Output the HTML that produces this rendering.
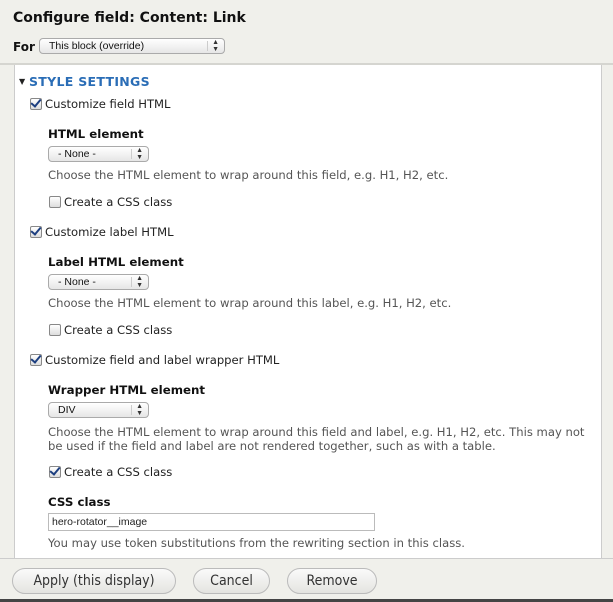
<!DOCTYPE html>
<html><head><style>
body{margin:0;width:613px;height:602px;background:#f0f0eb;font-family:"DejaVu Sans","Liberation Sans",sans-serif;font-size:11.6px;color:#222;position:relative;overflow:hidden}
.a{position:absolute;white-space:nowrap;line-height:14px}
.t{font-weight:bold;font-size:14px;left:13px;top:8px;line-height:20px;color:#111}
.b{font-weight:bold;font-size:11.8px;color:#111}
.d{color:#555}
.sel{position:absolute;height:14px;border:1px solid #aaa;border-radius:4px;background:linear-gradient(#fff,#e6e6e6);font-family:"Liberation Sans",sans-serif;font-size:10.5px;line-height:14px;color:#111;padding-left:9px;box-sizing:content-box}
.sel:after{content:"";position:absolute;right:16px;top:2px;width:1px;height:10px;background:#ccc}
.sel i{position:absolute;right:5px;top:0;font-style:normal;font-size:7px;line-height:7px;color:#333}
.cb{position:absolute;width:10px;height:10px;border:1px solid #888;border-radius:2px;background:linear-gradient(#fff,#ddd);margin-top:1px}
.cb.k:after{content:"";position:absolute;left:2px;top:-2px;width:4px;height:8px;border:solid #1d3f80;border-width:0 2px 2px 0;transform:rotate(40deg)}
.btn{position:absolute;top:568px;height:24px;border:1px solid #bbb;border-radius:13px;background:linear-gradient(#fafafa,#e4e4e0);font-size:14px;line-height:24px;text-align:center;color:#333;font-family:"DejaVu Sans Condensed","DejaVu Sans",sans-serif}
</style></head><body>
<div class="a t">Configure field: Content: Link</div>
<div class="a b" style="left:13px;top:40px;font-size:12px">For</div>
<div class="sel" style="left:39px;top:38px;width:175px">This block (override)<i>▲<br>▼</i></div>
<div style="position:absolute;left:0;top:63px;width:613px;height:2px;background:#d5d5d0"></div>
<div style="position:absolute;left:14px;top:65px;width:586px;height:493px;background:#fff;border-left:1px solid #ccc;border-right:1px solid #ccc"></div>
<div class="a" style="left:19px;top:75px;font-size:8px;color:#222">▼</div>
<div class="a" style="left:29px;top:75px;font-weight:bold;color:#2a6db6;font-size:12.5px;letter-spacing:0.3px">STYLE SETTINGS</div>

<div class="cb k" style="left:30px;top:97px"></div><div class="a" style="left:45px;top:97px">Customize field HTML</div>
<div class="a b" style="left:48px;top:127px">HTML element</div>
<div class="sel" style="left:48px;top:146px;width:90px">- None -<i>▲<br>▼</i></div>
<div class="a d" style="left:48px;top:168px">Choose the HTML element to wrap around this field, e.g. H1, H2, etc.</div>
<div class="cb" style="left:49px;top:195px"></div><div class="a" style="left:64px;top:195px">Create a CSS class</div>

<div class="cb k" style="left:30px;top:225px"></div><div class="a" style="left:45px;top:225px">Customize label HTML</div>
<div class="a b" style="left:48px;top:255px">Label HTML element</div>
<div class="sel" style="left:48px;top:274px;width:90px">- None -<i>▲<br>▼</i></div>
<div class="a d" style="left:48px;top:296px">Choose the HTML element to wrap around this label, e.g. H1, H2, etc.</div>
<div class="cb" style="left:49px;top:323px"></div><div class="a" style="left:64px;top:323px">Create a CSS class</div>

<div class="cb k" style="left:30px;top:353px"></div><div class="a" style="left:45px;top:353px">Customize field and label wrapper HTML</div>
<div class="a b" style="left:48px;top:383px">Wrapper HTML element</div>
<div class="sel" style="left:48px;top:402px;width:90px">DIV<i>▲<br>▼</i></div>
<div class="a d" style="left:48px;top:425px">Choose the HTML element to wrap around this field and label, e.g. H1, H2, etc. This may not</div>
<div class="a d" style="left:48px;top:439px">be used if the field and label are not rendered together, such as with a table.</div>
<div class="cb k" style="left:49px;top:465px"></div><div class="a" style="left:64px;top:465px">Create a CSS class</div>
<div class="a b" style="left:48px;top:495px">CSS class</div>
<div style="position:absolute;left:48px;top:513px;width:327px;height:18px;border:1px solid #bbb;font-family:'Liberation Sans',sans-serif;font-size:10.5px;line-height:16px;padding-left:3px;box-sizing:border-box">hero-rotator__image</div>
<div class="a d" style="left:48px;top:536px">You may use token substitutions from the rewriting section in this class.</div>
<div style="position:absolute;left:0;top:558px;width:613px;height:1px;background:#ccc"></div>
<div class="btn" style="left:12px;width:162px">Apply (this display)</div>
<div class="btn" style="left:193px;width:75px">Cancel</div>
<div class="btn" style="left:287px;width:88px">Remove</div>
<div style="position:absolute;left:0;top:599px;width:613px;height:3px;background:#444"></div>
</body></html>
